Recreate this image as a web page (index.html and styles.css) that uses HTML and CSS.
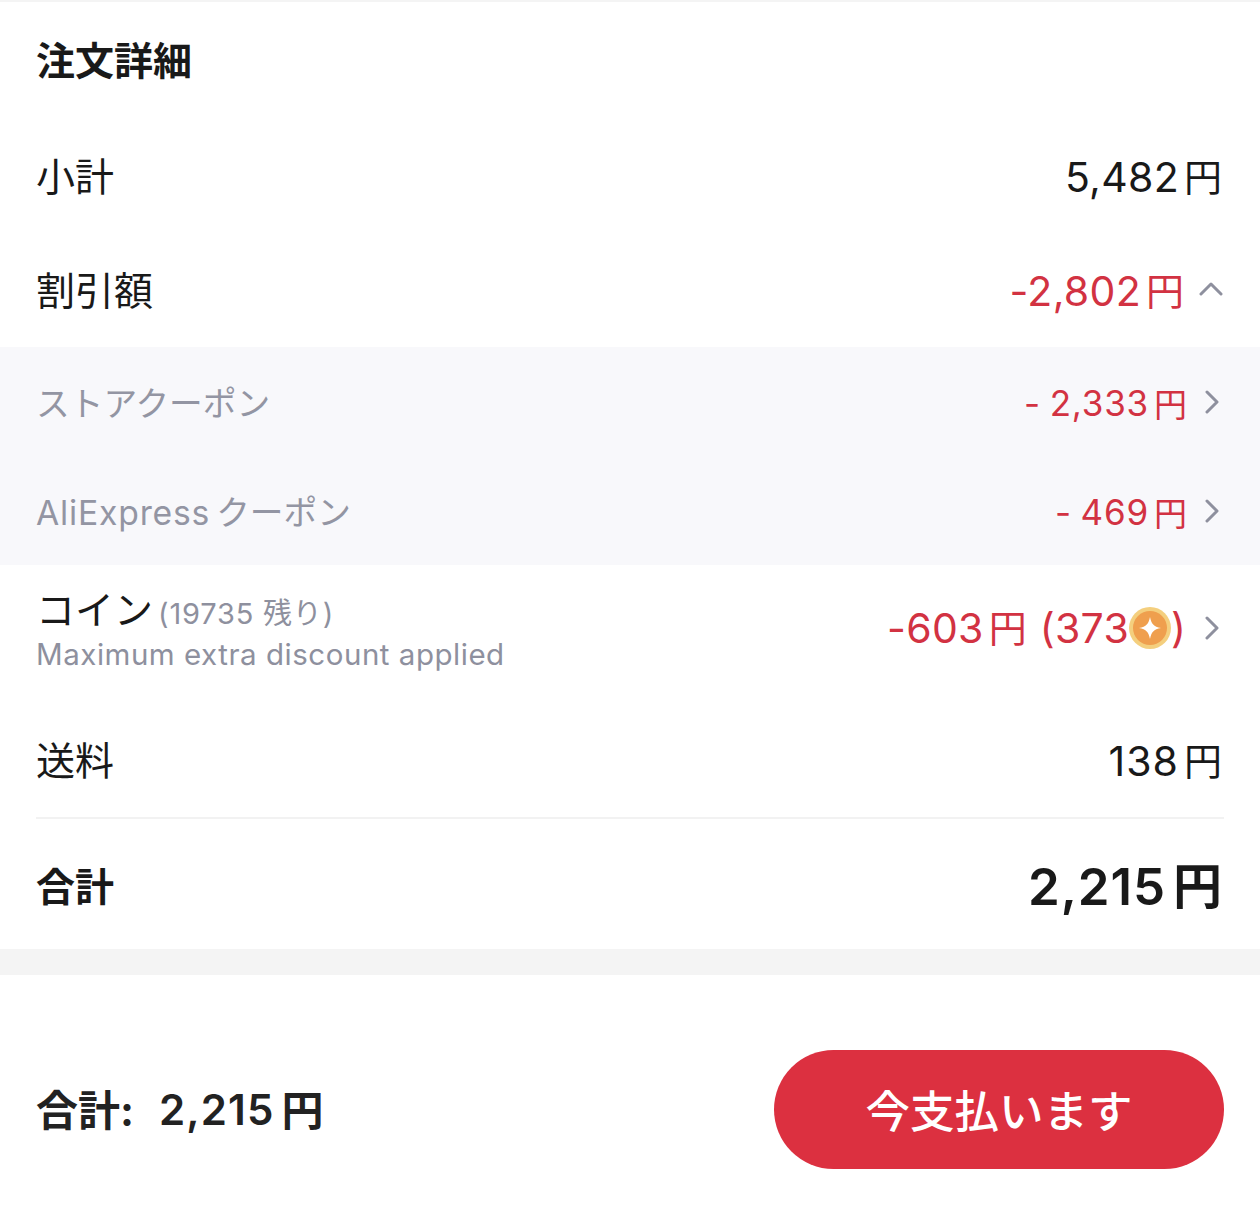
FILE: index.html
```html
<!DOCTYPE html>
<html lang="ja">
<head>
<meta charset="utf-8">
<title>注文詳細</title>
<link rel="stylesheet" href="styles.css">
</head>
<body>
<main class="page">
  <section class="details">
    <h1 class="title">注文詳細</h1>
    <div class="row row-subtotal"><span class="label">小計</span><span class="value"><span class="num">5,482</span><span class="yen">円</span></span></div>
    <div class="row row-discount"><span class="label">割引額</span>
      <span class="value-wrap"><span class="value red"><span class="num">-2,802</span><span class="yen">円</span></span>
        <svg class="chev chev-up" viewBox="0 0 24 14"><path d="M2 12 12 2l10 10"/></svg></span></div>
    <div class="subs">
      <div class="sub"><span class="sub-label">ストアクーポン</span>
        <span class="value-wrap"><span class="sub-value"><span class="num">- 2,333</span><span class="yen">円</span></span>
          <svg class="chev chev-right" viewBox="0 0 14 24"><path d="M2 2l10 10L2 22"/></svg></span></div>
      <div class="sub"><span class="sub-label"><span class="latin">AliExpress</span><span class="coupon">クーポン</span></span>
        <span class="value-wrap"><span class="sub-value"><span class="num">- 469</span><span class="yen">円</span></span>
          <svg class="chev chev-right" viewBox="0 0 14 24"><path d="M2 2l10 10L2 22"/></svg></span></div>
    </div>
    <div class="row row-coin">
      <div class="coin-text">
        <div class="coin-line"><span class="label">コイン</span> <span class="coin-left">(19735 残り)</span></div>
        <div class="coin-note">Maximum extra discount applied</div>
      </div>
      <span class="value-wrap"><span class="value red coin-value"><span class="num">-603</span><span class="yen yen-mid">円</span><span class="num">(373</span><svg class="coin" viewBox="0 0 44 44"><circle cx="22" cy="22" r="21" fill="#f4cf7e"/><circle cx="22" cy="22" r="17" fill="#ef9f4e"/><path d="M22 11c1.500 7 3.500 9.500 11 11-7.500 1.500-9.500 4-11 11-1.500-7-3.500-9.500-11-11 7.500-1.500 9.500-4 11-11z" fill="#fff"/></svg>)</span>
        <svg class="chev chev-right" viewBox="0 0 14 24"><path d="M2 2l10 10L2 22"/></svg></span>
    </div>
    <div class="row row-shipping"><span class="label">送料</span><span class="value"><span class="num num-wide">138</span><span class="yen">円</span></span></div>
    <div class="row row-total"><span class="label strong">合計</span><span class="total"><span class="num">2,215</span><span class="yen">円</span></span></div>
  </section>
  <div class="band"></div>
  <footer class="footer">
    <span class="foot-total"><span class="foot-label">合計:</span><span class="num">2,215</span><span class="yen">円</span></span>
    <button class="pay">今支払います</button>
  </footer>
</main>
</body>
</html>
```

FILE: styles.css
```css
* { box-sizing: border-box; }
html, body { margin: 0; padding: 0; background: #fff; }
body { font-family: Inter, "Noto Sans CJK JP", sans-serif; color: #191919; }
.page { width: 1260px; height: 1206px; border-top: 2px solid #f4f4f4; overflow: hidden; }
.title { margin: 0; padding: 0 36px 6px; height: 117px; display: flex; align-items: center; font-size: 39px; font-weight: 700; }
.row { display: flex; justify-content: space-between; align-items: center; padding: 0 36px; }
.row-subtotal { height: 115px; }
.row-discount { height: 113px; }
.row-coin { height: 126px; }
.row-shipping { height: 126px; padding-top: 14px; }
.row-total { height: 132px; margin: 0 36px; padding: 6px 0 0; border-top: 2px solid #f2f2f2; }
.label { font-size: 39px; line-height: 46px; }
.strong { font-weight: 700; }
.value { display: flex; align-items: center; font-size: 41px; line-height: 48px; white-space: nowrap; }
.num { letter-spacing: 0.300px; }
.num-wide { letter-spacing: 1px; }
.yen { font-size: 38px; margin-left: 5px; margin-right: 2px; }
.red { color: #d23242; }
.value-wrap { display: flex; align-items: center; gap: 14px; }
.chev { fill: none; stroke: #8e909e; stroke-width: 3px; stroke-linecap: round; stroke-linejoin: round; }
.chev-up { width: 24px; height: 14px; margin: -4px 1px 0 -1px; }
.chev-right { width: 14px; height: 24px; margin: 0 5px 0 3px; }
.subs { background: #f8f8fb; height: 218px; display: flex; flex-direction: column; }
.sub { flex: 1; display: flex; justify-content: space-between; align-items: center; padding: 0 36px; }
.sub-label { font-size: 33.700px; color: #9395a3; }
.latin { letter-spacing: 0.800px; }
.coupon { margin-left: 6px; }
.sub-value { display: flex; align-items: center; padding-top: 2px; font-size: 35px; color: #d23242; white-space: nowrap; }
.sub-value .num { letter-spacing: 0.800px; word-spacing: -2px; }
.sub-value .yen { font-size: 33px; margin-left: 5px; margin-right: 1px; }
.coin-text { padding-top: 3px; }
.coin-line { display: flex; align-items: baseline; gap: 5px; height: 46px; }
.coin-left { font-size: 29px; letter-spacing: 0.800px; color: #8e909e; }
.coin-note { margin-top: 2px; font-size: 29.500px; line-height: 38px; color: #8e909e; letter-spacing: 0.520px; }
.coin-value { display: flex; align-items: center; margin-right: 2px; }
.yen-mid { margin-right: 13px; }
.coin { width: 44px; height: 44px; margin: 0 -1px; }
.total { display: flex; align-items: center; font-size: 51px; line-height: 60px; font-weight: 600; white-space: nowrap; }
.total .num { letter-spacing: 0.900px; }
.total .yen { font-size: 49px; font-weight: 700; margin-left: 7px; margin-right: 2px; }
.band { height: 26px; background: #f4f4f4; }
.footer { display: flex; justify-content: space-between; align-items: center; padding: 75px 36px 0 36px; }
.foot-total { display: flex; align-items: center; font-size: 42px; font-weight: 600; color: #222; white-space: nowrap; }
.foot-total .num { letter-spacing: 1.100px; }
.foot-label { margin: 0 25px 4px 0; font-weight: 700; }
.foot-total .yen { font-size: 42px; font-weight: 700; margin: 0 0 4px 7px; }
.pay { width: 450px; height: 119px; padding-bottom: 4px; border: 0; border-radius: 60px; background: #dc3040; color: #fff; font-family: inherit; font-size: 44.500px; font-weight: 500; }
```
